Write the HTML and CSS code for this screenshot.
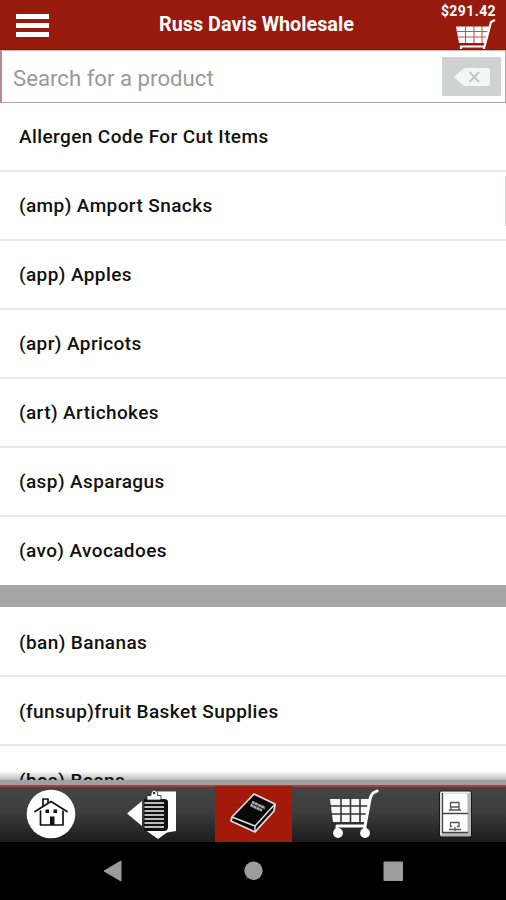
FILE: index.html
```
<!DOCTYPE html>
<html lang="en">
<head>
    <meta charset="UTF-8">
    <meta name="viewport" content="width=device-width, initial-scale=1.0">
    <title>Russ Davis Wholesale</title>
    <link rel="stylesheet" href="styles.css">
</head>
<body>
    <header class="header">
        <button class="menu-btn" aria-label="Menu">
            <span></span>
            <span></span>
            <span></span>
        </button>
        <h1 class="title">Russ Davis Wholesale</h1>
        <div class="cart">
            <span class="cart__total">$291.42</span>
            <svg class="cart__icon" width="41" height="31" viewBox="0 0 41 31">
                <path d="M1 7.500H34L31 24H4Z" fill="#fff"/>
                <path d="M10.500 7V24M19 7V24M27 7V24M1 12.500H34M2 18H34" stroke="#b85a50" stroke-width="1.100"/>
                <path d="M40 1L36 3L29.500 27.500H6V31M29 27V31" fill="none" stroke="#fff" stroke-width="2.200"/>
            </svg>
        </div>
    </header>

    <div class="search">
        <input class="search__input" type="text" placeholder="Search for a product">
        <button class="search__clear" aria-label="Clear">
            <svg width="36" height="18" viewBox="0 0 36 18">
                <path d="M0 9L8 1.500Q9.500 0 11.500 0H34Q36 0 36 2V16Q36 18 34 18H11.500Q9.500 18 8 16.500Z" fill="#f4f5f5"/>
                <path d="M15.500 4L25 14M25 4L15.500 14" stroke="#c4c6c6" stroke-width="2"/>
            </svg>
        </button>
    </div>

    <main class="list">
        <ul class="group">
            <li class="row">Allergen Code For Cut Items</li>
            <li class="row">(amp) Amport Snacks</li>
            <li class="row">(app) Apples</li>
            <li class="row">(apr) Apricots</li>
            <li class="row">(art) Artichokes</li>
            <li class="row">(asp) Asparagus</li>
            <li class="row">(avo) Avocadoes</li>
        </ul>
        <ul class="group">
            <li class="row">(ban) Bananas</li>
            <li class="row">(funsup)fruit Basket Supplies</li>
            <li class="row">(bea) Beans</li>
        </ul>
        <div class="scrollbar"></div>
    </main>

    <nav class="tabs">
        <a class="tab">
            <svg width="50" height="50" viewBox="0 0 50 50">
                <circle cx="25" cy="25" r="24.300" fill="#fff"/>
                <g fill="none" stroke="#111" stroke-width="1.700" stroke-linejoin="round" stroke-linecap="round">
                    <path d="M9 22.500L25 12.500L41 22.500"/>
                    <path d="M14.500 22V36H37V22"/>
                    <path d="M17 16.500V10H22V13.500"/>
                </g>
                <path d="M24 27.500H28.500V36H24ZM19.500 20.500H23V24H19.500ZM27.500 20.500H31V24H27.500Z" fill="#111"/>
            </svg>
        </a>
        <a class="tab">
            <svg width="50" height="50" viewBox="0 0 50 50">
                <path d="M0 24.500L15 12V37Z" fill="#fff"/>
                <path d="M28 2.500H49V42L40 43.500L31 50L19 41.500L28 40Z" fill="#fff"/>
                <path d="M17 10H37Q41 10 41 13V38Q41 42 37 42H17Z" fill="#111"/>
                <path d="M17.500 14H37M17.500 18H37M17.500 22H37M17.500 26H37M17.500 30H37M17.500 34H37M17.500 38H37" stroke="#bbb" stroke-width="2"/>
                <path d="M20 11V6.500H24V4Q27 -2 30.500 4V6.500H34V11Z" fill="#fff" stroke="#222" stroke-width=".8"/>
                <circle cx="27" cy="4" r="1.200" fill="#222"/>
            </svg>
        </a>
        <a class="tab tab--active">
            <svg width="50" height="50" viewBox="0 0 50 50">
                <path d="M4 28L26 5L47 15L46 22L27 43L3 32Z" fill="#080808" stroke="#e8dddd" stroke-width="1.800" stroke-linejoin="round"/>
                <path d="M4 28L27 37L47 15M27 37V43" fill="none" stroke="#ddd" stroke-width="1.500"/>
                <path d="M24 13L37 19M22.500 16L34 21.500" stroke="#aaa" stroke-width="2.600" stroke-dasharray="3 .4"/>
            </svg>
        </a>
        <a class="tab">
            <svg width="50" height="50" viewBox="0 0 50 50">
                <path d="M1 10H41L37 33H4Z" fill="#f8f8f8"/>
                <path d="M12 10V33M21.500 10V33M31 10V33" stroke="#333" stroke-width="1.600"/>
                <path d="M1 17H41M2 25H40" stroke="#333" stroke-width="1.600"/>
                <path d="M48 2L44 4Q42 6 41 10L36 37H8V42M36 37V42" fill="none" stroke="#fff" stroke-width="3" stroke-linecap="round" stroke-linejoin="round"/>
                <circle cx="9" cy="44" r="4.900" fill="#fff"/>
                <circle cx="36" cy="44" r="4.900" fill="#fff"/>
            </svg>
        </a>
        <a class="tab">
            <svg width="50" height="50" viewBox="0 0 50 50">
                <rect x="9.500" y="2" width="32" height="46" rx="2" fill="#b5b5b5" stroke="#181818"/>
                <path d="M11 46V3.500H40" fill="none" stroke="#eee" stroke-width="1.500"/>
                <rect x="12.500" y="4.500" width="25" height="39" fill="#fff"/>
                <path d="M12.500 4V43.500H38M12 24.500H38" fill="none" stroke="#444" stroke-width="1.300"/>
                <path d="M20.500 13.500H29V18H20.500ZM19 21H31M21 18.500V21M29 18.500V21M20.500 33.500H29V37.500H27M20.500 33.500V37.500H22M19 40.500H31M25 38V42" fill="none" stroke="#555" stroke-width="1.300"/>
            </svg>
        </a>
    </nav>

    <div class="navbar">
        <svg width="506" height="58" viewBox="0 0 506 58">
            <path d="M104 29L121 19V39Z" fill="#9c9c9c" stroke="#9c9c9c" stroke-linejoin="round"/>
            <circle cx="253.500" cy="28.800" r="9.200" fill="#9c9c9c"/>
            <rect x="383.500" y="19.500" width="19.500" height="19.500" rx="1" fill="#9c9c9c"/>
        </svg>
    </div>
</body>
</html>
```
FILE: styles.css
```
* {
    box-sizing: border-box;
}

body {
    margin: 0;
    height: 100vh;
    display: flex;
    flex-direction: column;
    overflow: hidden;
    background: #fff;
    font-family: Roboto, "Liberation Sans", sans-serif;
}

button {
    border: 0;
    padding: 0;
    background: none;
}

.header {
    flex: none;
    height: 50px;
    display: grid;
    grid-template-columns: 90px 1fr 90px;
    background: #981a0c;
    border-bottom: 1px solid #8a1509;
    color: #fff;
}

.menu-btn {
    display: flex;
    flex-direction: column;
    gap: 4px;
    padding: 14px 0 0 16px;
}

.menu-btn span {
    width: 33px;
    height: 5px;
    background: #fff;
}

.title {
    margin: 0;
    padding-left: 7px;
    text-align: center;
    font-size: 19.8px;
    font-weight: 700;
    line-height: 49px;
    white-space: nowrap;
}

.cart {
    display: flex;
    flex-direction: column;
    align-items: flex-end;
    padding: 3px 10px 0 0;
    overflow: hidden;
}

.cart__total {
    font-size: 14px;
    font-weight: 700;
    line-height: 16px;
    letter-spacing: 0.4px;
}

.cart__icon {
    flex: none;
}

.search {
    flex: none;
    height: 53px;
    display: flex;
    align-items: center;
    padding-right: 4px;
    border: 1px solid #b5a5a7;
    border-left: 2px solid #b38c92;
    border-top-color: #d8b5b0;
}

.search__input {
    flex: 1;
    min-width: 0;
    border: 0;
    padding: 2px 0 0 11px;
    background: none;
    font: 400 22.2px Roboto, "Liberation Sans", sans-serif;
    outline: 0;
}

.search__input::placeholder {
    color: #999;
}

.search__clear {
    width: 59px;
    height: 39px;
    display: flex;
    align-items: center;
    justify-content: center;
    border-radius: 1px;
    background: #d0d2d2;
}

.list {
    flex: none;
    position: relative;
    height: 677px;
    overflow: hidden;
}

/* shade above the tab bar */
.list::after {
    content: "";
    position: absolute;
    left: 0;
    right: 0;
    bottom: 0;
    height: 9px;
    background: linear-gradient(rgba(0, 0, 0, 0), rgba(0, 0, 0, 0.27));
}

.group {
    list-style: none;
    margin: 0;
    padding: 0;
}

.group + .group {
    padding-top: 1px;
    border-top: 22px solid #a7a7a7;
}

.row {
    height: 69px;
    padding: 0 19px;
    border-bottom: 2px solid #e9e9e9;
    color: #111;
    font-size: 19px;
    font-weight: 500;
    line-height: 68px;
    letter-spacing: 0.4px;
    white-space: nowrap;
}

.group + .group .row {
    line-height: 70px;
}

.group:first-child .row:last-child {
    height: 68px;
    border-bottom: 0;
}

.scrollbar {
    position: absolute;
    top: 73px;
    right: 0;
    width: 1px;
    height: 50px;
    background: #d5cfd0;
}

.tabs {
    flex: none;
    height: 62px;
    display: grid;
    grid-template-columns: repeat(5, 1fr);
    border-top: 5px solid #a0a0a0;
    background: linear-gradient(#b23a3c 2px, #454545 2px, #3e3e3e 45%, #1c1c1c);
}

.tab {
    display: flex;
    align-items: center;
    justify-content: center;
    padding-top: 1px;
}

.tab--active {
    margin: 1px 12px 0 13px;
    padding: 0;
    background: #a31a0b;
}

.navbar {
    flex: none;
    height: 58px;
    background: #000;
}
```
